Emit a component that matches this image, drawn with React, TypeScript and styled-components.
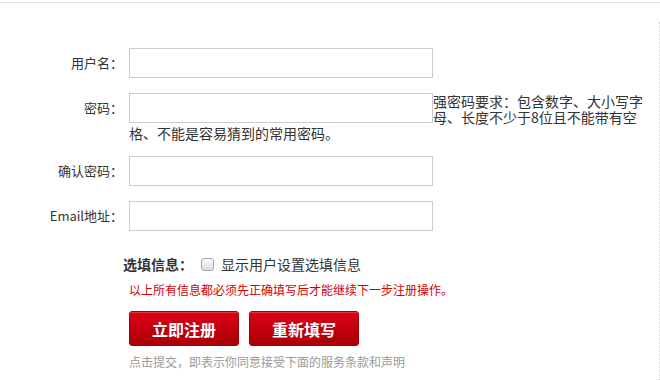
import React from "react";
import styled, { createGlobalStyle } from "styled-components";

const Global = createGlobalStyle`
  html, body { margin: 0; padding: 0; background: #fff; }
  body { font-family: "Noto Sans CJK SC", "Liberation Sans", sans-serif; color: #333; }
  * { box-sizing: border-box; }
`;

const TopRule = styled.div`
  margin-top: 2px;
  height: 1px;
  background: #e2e2e2;
`;

const Panel = styled.div`
  margin-top: 19px;
  width: 660px;
  height: 358px;
  border-right: 1px dotted #cfcfcf;
  padding-top: 26px;
`;

const Row = styled.div<{ $top?: boolean }>`
  display: flex;
  align-items: ${(p) => (p.$top ? "flex-start" : "center")};
  margin-bottom: 15px;
`;

const Label = styled.label`
  width: 123px;
  flex: none;
  text-align: right;
  font-size: 13px;
  line-height: 30px;
  color: #333;
  padding-right: 0;
  margin-right: 6px;
  white-space: nowrap;
`;

const Field = styled.div`
  width: 520px;
  font-size: 14px;
  line-height: 16px;
  color: #333;
`;

const TextInput = styled.input<{ $float?: boolean }>`
  display: block;
  width: 304px;
  height: 30px;
  border: 1px solid #cccccc;
  background: #fff;
  padding: 0 6px;
  margin: 0;
  font-size: 14px;
  outline: none;
  ${(p) => (p.$float ? "float: left;" : "")}
`;

const Hint = styled.span`
  font-size: 14px;
  line-height: 16px;
  color: #333;
`;

const Options = styled.div`
  display: flex;
  align-items: center;
  padding-left: 123px;
  margin-top: 23px;
  height: 20px;
`;

const OptionTitle = styled.span`
  font-size: 14px;
  font-weight: bold;
  color: #333;
  margin-right: 8px;
`;

const Check = styled.input`
  appearance: none;
  width: 13px;
  height: 13px;
  margin: 0 7px 0 0;
  border: 1px solid #a9a9a9;
  border-radius: 3px;
  background: linear-gradient(#fafafa, #dcdcdc);
`;

const OptionText = styled.span`
  font-size: 14px;
  color: #333;
`;

const Notice = styled.p<{ $tone: "red" | "gray" }>`
  margin: ${(p) => (p.$tone === "red" ? "8px" : "8px")} 0 0 129px;
  font-size: 12px;
  line-height: 16px;
  color: ${(p) => (p.$tone === "red" ? "#d40000" : "#999")};
`;

const Buttons = styled.div`
  display: flex;
  gap: 10px;
  margin: 13px 0 0 129px;
`;

const RedButton = styled.button`
  width: 110px;
  height: 35px;
  border: 1px solid #a10000;
  border-radius: 3px;
  background: linear-gradient(#dc0018, #a80006);
  box-shadow: inset 0 1px 0 rgba(255, 120, 120, 0.45);
  color: #fff;
  font-family: "Noto Sans CJK SC", sans-serif;
  font-size: 16px;
  font-weight: bold;
  letter-spacing: 0;
  padding: 0;
  cursor: pointer;
`;

export default function App() {
  return (
    <>
      <Global />
      <TopRule />
      <Panel>
        <Row>
          <Label>用户名：</Label>
          <Field>
            <TextInput type="text" />
          </Field>
        </Row>
        <Row $top>
          <Label>密码：</Label>
          <Field>
            <TextInput type="password" $float />
            <Hint>强密码要求：包含数字、大小写字母、长度不少于8位且不能带有空格、不能是容易猜到的常用密码。</Hint>
          </Field>
        </Row>
        <Row>
          <Label>确认密码：</Label>
          <Field>
            <TextInput type="password" />
          </Field>
        </Row>
        <Row>
          <Label>Email地址：</Label>
          <Field>
            <TextInput type="text" />
          </Field>
        </Row>
        <Options>
          <OptionTitle>选填信息：</OptionTitle>
          <Check type="checkbox" />
          <OptionText>显示用户设置选填信息</OptionText>
        </Options>
        <Notice $tone="red">以上所有信息都必须先正确填写后才能继续下一步注册操作。</Notice>
        <Buttons>
          <RedButton type="button">立即注册</RedButton>
          <RedButton type="button">重新填写</RedButton>
        </Buttons>
        <Notice $tone="gray">点击提交，即表示你同意接受下面的服务条款和声明</Notice>
      </Panel>
    </>
  );
}
